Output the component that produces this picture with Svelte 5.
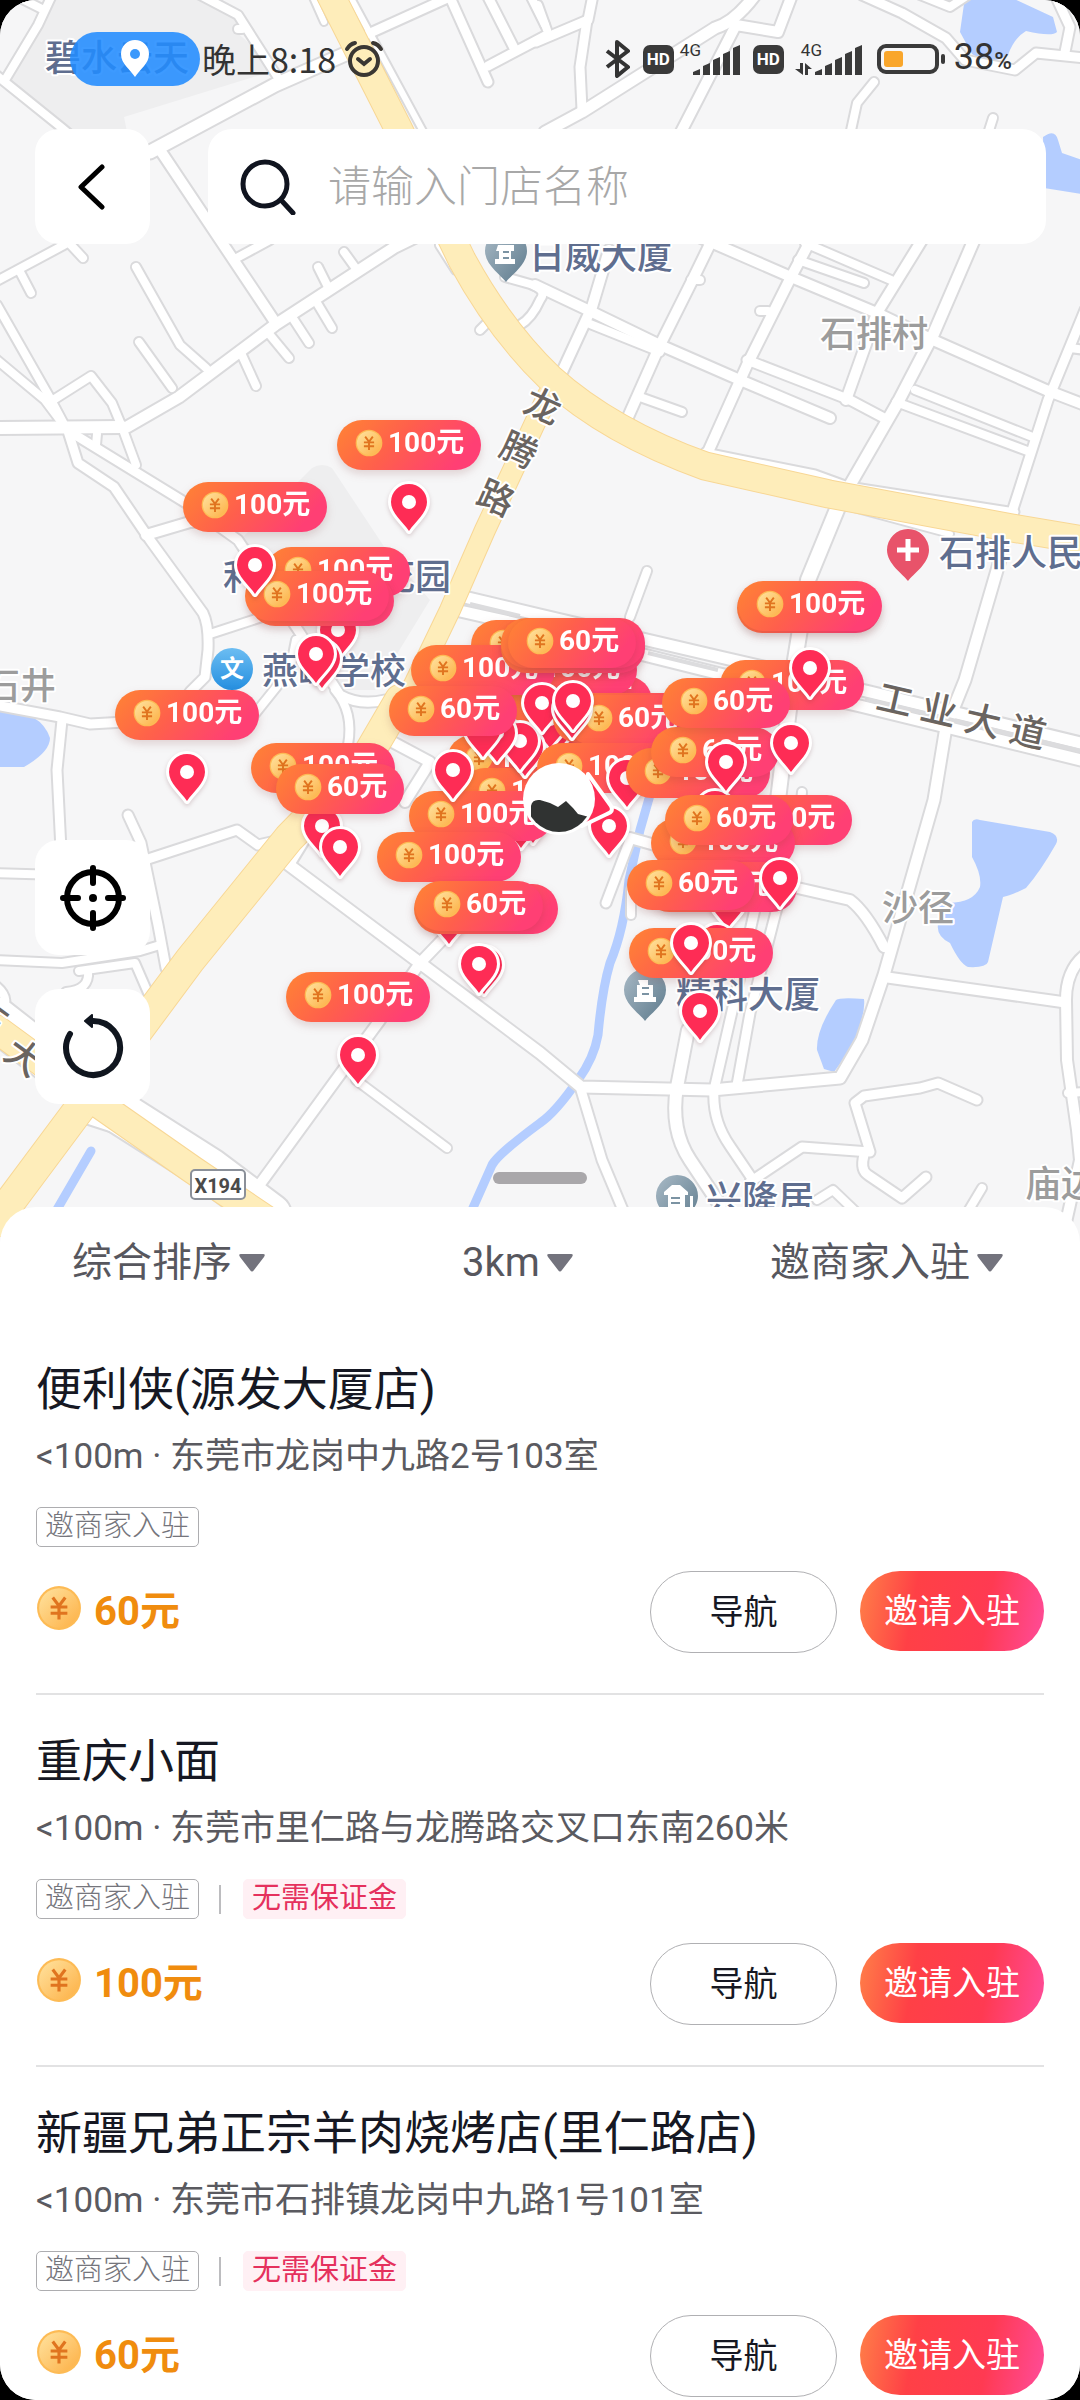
<script lang="ts">
  interface Road {
    readonly d: string;
    readonly w?: number;
  }

  interface MapLabel {
    readonly text: string;
    readonly x: number;
    readonly y: number;
    readonly tone: "poi" | "area" | "road";
    readonly rotate?: number;
  }

  // A pill is placed by its centre and top edge, a pin by its tip.
  interface Marker {
    readonly kind: "pill" | "pin";
    readonly x: number;
    readonly y: number;
    readonly price?: number;
  }

  interface Store {
    readonly name: string;
    readonly address: string;
    readonly price: number;
    readonly noDeposit: boolean;
  }

  const roads: readonly Road[] = [
    { d: "M52 -5L38 25L5 80" },
    { d: "M20 -2L44 10" },
    { d: "M-5 74L62 128L100 160" },
    { d: "M200 -5L238 15L282 84" },
    { d: "M238 29L242 29" },
    { d: "M150 152L275 85L350 52", w: 13 },
    { d: "M368 34L452 -4", w: 9 },
    { d: "M160 150L275 322", w: 10 },
    { d: "M-5 282L62 246L110 218" },
    { d: "M19 270L31 293" },
    { d: "M70 244L83 258" },
    { d: "M127 427L179 397L275 325L395 247L440 225", w: 11 },
    { d: "M233 260L270 240" },
    { d: "M318 267L328 287" },
    { d: "M344 252L357 270" },
    { d: "M317 303L332 328" },
    { d: "M294 320L309 343" },
    { d: "M270 335L289 358" },
    { d: "M241 353L256 386" },
    { d: "M136 267L180 345L206 368" },
    { d: "M139 342L172 388" },
    { d: "M-3 305L50 398L66 428" },
    { d: "M-3 360L45 400L66 428" },
    { d: "M50 402L91 376L112 403L122 427" },
    { d: "M-5 428L122 427", w: 12 },
    { d: "M67 428L78 463L114 487L150 540L203 613Q209 625 208 650L205 677L190 692", w: 9 },
    { d: "M122 427L136 465" },
    { d: "M72 433L186 503L238 540L300 633L340 695Q360 706 385 700", w: 9 },
    { d: "M97 434L96 445" },
    { d: "M146 535L190 522L220 520", w: 10 },
    { d: "M210 634L262 617" },
    { d: "M296 640L290 670L250 720" },
    { d: "M335 690Q354 712 348 745" },
    { d: "M-5 705L60 717L90 724L125 722", w: 9 },
    { d: "M62 720L57 770L61 850", w: 9 },
    { d: "M385 738L430 762L405 802", w: 10 },
    { d: "M312 -5L324 22", w: 6 },
    { d: "M352 0L425 135L470 236", w: 6 },
    { d: "M440 245L456 270" },
    { d: "M449 -5L488 82", w: 9 },
    { d: "M487 -5L515 50", w: 9 },
    { d: "M488 66L545 36", w: 9 },
    { d: "M530 -5L545 25" },
    { d: "M480 330L492 318" },
    { d: "M520 325Q532 318 540 300Q548 290 530 284L505 277" },
    { d: "M536 42L588 20L593 -5", w: 9 },
    { d: "M538 5L547 30" },
    { d: "M587 20L580 67L582 110", w: 9 },
    { d: "M545 132L582 112L715 28Q735 22 755 -5", w: 11 },
    { d: "M681 132L736 25L778 32L792 -5", w: 10 },
    { d: "M862 -5L902 13L946 38L965 60L1015 70L1036 53L1085 58", w: 9 },
    { d: "M1065 52L1070 27L1055 -5", w: 9 },
    { d: "M920 -5L950 7L968 -5" },
    { d: "M874 82L857 103L850 135" },
    { d: "M993 118L986 140" },
    { d: "M535 285L592 312L660 345L740 380L830 418", w: 10 },
    { d: "M590 324L660 352" },
    { d: "M609 250L592 307L562 372", w: 10 },
    { d: "M712 240L691 283L660 345L628 417", w: 10 },
    { d: "M691 280L700 280" },
    { d: "M808 245L791 277L747 365L708 452", w: 10 },
    { d: "M760 311L768 311" },
    { d: "M690 233L791 277L877 313L933 340L1046 390L1085 405", w: 10 },
    { d: "M798 260L864 283" },
    { d: "M805 243L891 280" },
    { d: "M922 240L877 313L846 400", w: 10 },
    { d: "M747 360L850 400L884 418", w: 9 },
    { d: "M974 240L933 335L898 402L850 485", w: 11 },
    { d: "M896 402L1030 452" },
    { d: "M915 390L1035 438" },
    { d: "M1085 310L1048 400L1012 512", w: 9 },
    { d: "M1070 348L1085 350" },
    { d: "M640 397L682 412" },
    { d: "M705 452L815 474L848 486L1015 512", w: 7 },
    { d: "M850 507L950 534", w: 6 },
    { d: "M838 507L808 580L795 660L778 800", w: 14 },
    { d: "M647 571L630 617" },
    { d: "M802 792L798 830" },
    { d: "M1000 560L965 680L946 727L934 800L884 975L862 1040L840 1078L712 1090L581 1087L540 1053L420 963L285 862", w: 11 },
    { d: "M128 815L141 843L158 925L166 968", w: 9 },
    { d: "M-5 873L60 875" },
    { d: "M145 860L237 830L258 845L280 840", w: 9 },
    { d: "M-5 960L62 963L140 951L160 945", w: 8 },
    { d: "M79 971L135 963L152 1002", w: 8 },
    { d: "M88 971Q90 990 66 992L60 1000" },
    { d: "M-5 985Q14 1000 -2 1015" },
    { d: "M306 838L290 864", w: 9 },
    { d: "M444 938L420 963L380 1020L341 1073L252 1195", w: 10 },
    { d: "M356 1080L447 1148", w: 8 },
    { d: "M581 1090L602 1160L625 1215", w: 9 },
    { d: "M688 1030L677 1087Q670 1130 690 1160L720 1205", w: 12 },
    { d: "M757 900L733 1007L714 1090Q712 1120 730 1146L753 1180", w: 9 },
    { d: "M779 900L750 1013L737 1085", w: 9 },
    { d: "M750 1182L802 1147L870 1152L855 1103L864 1096L920 1088L938 1083L977 1100", w: 9 },
    { d: "M864 1155Q860 1170 868 1175L902 1198L926 1177", w: 9 },
    { d: "M817 1200L833 1190L856 1212", w: 8 },
    { d: "M982 1188L964 1218", w: 8 },
    { d: "M884 977L1062 1002", w: 10 },
    { d: "M1085 955Q1066 970 1066 1000L1067 1060L1077 1130L1080 1160L1062 1240", w: 10 },
    { d: "M1068 1093L1085 1092" },
    { d: "M780 884L850 900Q866 912 884 947", w: 10 },
    { d: "M630 840L606 903", w: 9 },
    { d: "M630 838L655 845", w: 10 },
    { d: "M631 890L631 915", w: 8 },
    { d: "M460 596L540 615L720 657L870 692L1085 744", w: 11 },
    { d: "M460 611L540 629L720 674L860 706L1085 761", w: 11 },
    { d: "M55 1130L75 1115L115 1128", w: 9 },
    { d: "M-5 1018L100 1100L210 1170L270 1215", w: 42 },
  ];

  const yellowRoads: readonly Road[] = [
    { d: "M328 -10L398 128L462 260Q500 330 550 378Q610 432 705 466L829 494L1012 528L1090 541", w: 27 },
    { d: "M548 395L485 530L450 610L397 720", w: 20 },
    { d: "M400 700L365 760L289 838L190 960L80 1108L-5 1222", w: 30 },
    { d: "M-5 1028L100 1105L193 1170L270 1222", w: 27 },
  ];

  const labels: readonly MapLabel[] = [
    { text: "碧水云天", x: 45, y: 71, tone: "poi" },
    { text: "日威大厦", x: 529, y: 269, tone: "poi" },
    { text: "石排村", x: 820, y: 347, tone: "area" },
    { text: "石排人民", x: 939, y: 566, tone: "poi" },
    { text: "利", x: 223, y: 590, tone: "poi" },
    { text: "花园", x: 379, y: 590, tone: "poi" },
    { text: "燕岭学校", x: 262, y: 684, tone: "poi" },
    { text: "石井", x: -16, y: 699, tone: "area" },
    { text: "沙径", x: 882, y: 921, tone: "area" },
    { text: "精科大厦", x: 676, y: 1008, tone: "poi" },
    { text: "兴隆居", x: 706, y: 1212, tone: "poi" },
    { text: "庙边", x: 1025, y: 1197, tone: "area" },
    { text: "龙", x: 525, y: 419, tone: "road", rotate: 24 },
    { text: "腾", x: 501, y: 463, tone: "road", rotate: 24 },
    { text: "路", x: 478, y: 511, tone: "road", rotate: 24 },
    { text: "工", x: 877, y: 713, tone: "road", rotate: 13 },
    { text: "业", x: 921, y: 723, tone: "road", rotate: 13 },
    { text: "大", x: 965, y: 734, tone: "road", rotate: 13 },
    { text: "道", x: 1010, y: 745, tone: "road", rotate: 13 },
    { text: "大", x: 6, y: 1070, tone: "road", rotate: 36 },
    { text: "石", x: -30, y: 1030, tone: "road", rotate: 36 },
  ];

  const pill = (x: number, y: number, price: number): Marker => ({ kind: "pill", x, y, price });
  const pin = (x: number, y: number): Marker => ({ kind: "pin", x, y });

  const markers: readonly Marker[] = [
    pill(409, 420, 100), pin(409, 531),
    pill(338, 547, 100), pin(338, 659),
    pill(322, 576, 100), pin(322, 688),
    pill(317, 571, 100), pin(316, 683),
    pill(255, 482, 100), pin(255, 594),
    pill(187, 690, 100), pin(187, 801),
    pill(323, 743, 100), pin(322, 855),
    pill(340, 764, 60), pin(340, 876),
    pill(358, 972, 100), pin(358, 1084),

    pill(519, 735, 100), pill(532, 768, 100),
    pin(533, 843), pin(521, 848),
    pill(580, 676, 100), pill(565, 645, 100),
    pill(543, 620, 100), pill(483, 645, 100),
    pill(573, 623, 100), pill(573, 618, 100), pill(572, 618, 60),
    pin(557, 752), pin(550, 748), pin(525, 776), pin(520, 770),
    pin(497, 762), pin(483, 757), pin(542, 732),
    pill(625, 693, 100), pill(631, 695, 60),
    pin(572, 738), pin(573, 730),
    pill(453, 686, 60),
    pill(609, 743, 100), pin(627, 807),
    pin(609, 855),
    pill(481, 791, 100), pin(453, 799),
    pill(449, 832, 100), pin(449, 944),
    pill(486, 884, 100), pill(479, 881, 60),
    pin(484, 994), pin(479, 993),

    pill(792, 660, 100),
    pill(809, 583, 100), pill(810, 581, 100), pin(810, 697),
    pill(698, 748, 100), pill(715, 727, 60), pin(715, 838),
    pill(726, 678, 60), pin(791, 772), pin(726, 791),
    pill(780, 795, 100),
    pill(723, 818, 100), pill(729, 795, 60),
    pill(725, 862, 100), pin(728, 928),
    pill(716, 862, 100), pill(691, 860, 60), pin(780, 907),
    pin(717, 972), pill(701, 928, 100), pin(691, 972),
    pin(700, 1040),
  ];

  const stores: readonly Store[] = [
    { name: "便利侠(源发大厦店)", address: "<100m · 东莞市龙岗中九路2号103室", price: 60, noDeposit: false },
    { name: "重庆小面", address: "<100m · 东莞市里仁路与龙腾路交叉口东南260米", price: 100, noDeposit: true },
    { name: "新疆兄弟正宗羊肉烧烤店(里仁路店)", address: "<100m · 东莞市石排镇龙岗中九路1号101室", price: 60, noDeposit: true },
  ];

  const sortOptions = ["综合排序"];
  const rangeOptions = ["3km"];
  const taskOptions = ["邀商家入驻"];
  const signalBars = [6, 12, 18, 24, 30];

  let keyword = $state("");
  let sort = $state(sortOptions[0]);
  let range = $state(rangeOptions[0]);
  let task = $state(taskOptions[0]);

  const filters = [
    { id: "sort", label: "排序", options: sortOptions, get: () => sort, set: (v: string) => (sort = v) },
    { id: "range", label: "距离", options: rangeOptions, get: () => range, set: (v: string) => (range = v) },
    { id: "task", label: "任务", options: taskOptions, get: () => task, set: (v: string) => (task = v) },
  ];

  function pillWidth(price = 0): number {
    return price >= 100 ? 144 : 128;
  }
</script>

<div class="screen">
  <section class="map">
    <svg class="canvas" viewBox="0 0 1080 1243" aria-label="地图">
      <defs>
        <linearGradient id="pill-fill" x1="0" y1="0" x2="1" y2="0.3">
          <stop offset="0" stop-color="#ff8434" />
          <stop offset="0.5" stop-color="#ff5f4c" />
          <stop offset="1" stop-color="#ff3f74" />
        </linearGradient>
        <linearGradient id="coin-fill" x1="0" y1="0" x2="1" y2="1">
          <stop offset="0" stop-color="#ffe3a0" />
          <stop offset="1" stop-color="#fdb045" />
        </linearGradient>
        <linearGradient id="poi-grey" x1="0" y1="0" x2="1" y2="1">
          <stop offset="0" stop-color="#a9bac6" />
          <stop offset="1" stop-color="#5d7a8c" />
        </linearGradient>
        <linearGradient id="poi-blue" x1="0" y1="0" x2="0" y2="1">
          <stop offset="0" stop-color="#6cbdf2" />
          <stop offset="1" stop-color="#258fe0" />
        </linearGradient>
        <clipPath id="avatar-clip"><circle cx="559" cy="799" r="33" /></clipPath>
        <symbol id="coin" viewBox="0 0 44 44">
          <circle cx="22" cy="22" r="21" fill="#fdbb55" />
          <circle cx="22" cy="22" r="19" fill="url(#coin-fill)" />
          <path d="M16 12L22 20L28 12M14 21H30M14 27H30M22 20V33" fill="none" stroke="#e0741f" stroke-width="3" />
        </symbol>
        <symbol id="pin" viewBox="-24 -54 48 60">
          <path
            d="M0 0C-6 -9 -18 -18 -18 -29A18 18 0 0 1 18 -29C18 -18 6 -9 0 0Z"
            fill="#fe2c55"
            stroke="#fff"
            stroke-width="6"
            stroke-linejoin="round"
            paint-order="stroke"
          />
          <circle cx="0" cy="-29" r="7" fill="#fff" />
        </symbol>
        <symbol id="poi" viewBox="-22 -22 44 54">
          <path d="M0 31C-5 24 -21 14 -21 0A21 21 0 0 1 21 0C21 14 5 24 0 31Z" />
        </symbol>
      </defs>

      <rect width="1080" height="1243" fill="#f6f6f7" />
      <path class="block" d="M52 0H203L238 17L234 30L265 57L270 72L124 117L127 132H66L10 80Z" />
      <path class="block" d="M290 490L312 468Q322 462 332 468L385 548L430 600L375 690H330L240 540Z" />

      <g class="water">
        <path d="M-5 712Q40 708 50 738Q50 752 24 767H-5Z" />
        <path d="M965 -3H1010L1053 17L1057 32Q1052 37 1026 31Q1014 38 1008 55Q990 66 972 54L960 32Z" />
        <path d="M1043 137Q1055 128 1058 140L1062 153L1082 160V194L1044 188Z" />
        <path d="M972 822Q974 818 980 820L1050 832Q1060 836 1056 844Q1040 872 1026 888Q1010 896 1003 897L988 962Q986 968 968 967Q960 964 950 943Q936 936 938 924V902Q972 906 980 887Q982 875 972 857Z" />
        <path d="M836 1000Q840 997 864 999Q866 1016 850 1050L834 1072L824 1069L817 1050Q816 1030 836 1000Z" />
      </g>
      <g class="river">
        <path d="M91 1151L52 1218" />
        <path d="M472 1210L492 1165Q498 1154 540 1123Q556 1112 578 1080Q594 1058 598 1035Q602 990 610 963Q624 930 629 880L640 830L660 760" />
      </g>

      <g class="casing">
        {#each roads as road}
          <path d={road.d} stroke-width={(road.w ?? 8) + 4} />
        {/each}
      </g>
      <g class="surface">
        {#each roads as road}
          <path d={road.d} stroke-width={road.w ?? 8} />
        {/each}
      </g>
      <path class="median" d="M470 604L520 616M648 653L718 670M865 699L1085 752" />
      <g class="yellow-casing">
        {#each yellowRoads as road}
          <path d={road.d} stroke-width={(road.w ?? 8) + 2} />
        {/each}
      </g>
      <g class="yellow-surface">
        {#each yellowRoads as road}
          <path d={road.d} stroke-width={road.w ?? 8} />
        {/each}
      </g>

      <g class="road-sign">
        <rect x="191" y="1170" width="54" height="29" rx="4" />
        <text x="218" y="1193" text-anchor="middle">X194</text>
      </g>

      {#each labels as label}
        <text class="label {label.tone}" transform="translate({label.x} {label.y}) rotate({label.rotate ?? 0} 18 -13)">{label.text}</text>
      {/each}

      <g fill="url(#poi-grey)">
        <use href="#poi" x="484" y="229" width="44" height="54" />
        <use href="#poi" x="623" y="968" width="44" height="54" />
        <use href="#poi" x="655" y="1174" width="44" height="54" />
      </g>
      <g class="building">
        <path d="M498 245h16v6h-3v8h4v5h-20v-5h4v-8h-3z" />
        <path d="M638 980h10v5h5v12h3v5h-22v-5h3v-12h3z" />
        <path d="M664 1192l8-7h8l8 7v3h-3v12h-17v-12h-4zM690 1196h3v11h-3z" />
      </g>
      <path class="windows" d="M503 252h6M503 258h6M642 988h7M642 994h7M671 1198h9M671 1203h9" />
      <use href="#poi" x="886" y="528" width="44" height="54" fill="#e8536a" />
      <path d="M908 539v22M897 550h22" stroke="#fff" stroke-width="5" />
      <circle cx="232" cy="669" r="21" fill="url(#poi-blue)" />
      <text class="school" x="232" y="677" text-anchor="middle">文</text>

      {#each markers as marker}
        {#if marker.kind === "pill"}
          <g class="pill" transform="translate({marker.x - pillWidth(marker.price) / 2} {marker.y})">
            <rect width={pillWidth(marker.price)} height="50" rx="25" fill="url(#pill-fill)" />
            <use href="#coin" x="18" y="9" width="28" height="28" />
            <text x="51" y="32">{marker.price}元</text>
          </g>
        {:else}
          <use class="pin" href="#pin" x={marker.x - 24} y={marker.y - 54} width="48" height="60" />
        {/if}
      {/each}

      <path d="M588 774L611 806Q614 812 607 814L582 826Z" fill="#fe2c55" stroke="#fff" stroke-width="4" stroke-linejoin="round" />
      <circle class="avatar" cx="559" cy="799" r="36" />
      <path
        d="M531 806Q532 799 540 800L550 803L558 807L566 801L573 808L578 814L589 817L594 822L586 845H531Z"
        fill="#303332"
        clip-path="url(#avatar-clip)"
      />
    </svg>

    <header class="status">
      <div class="status-left">
        <span class="location" aria-label="定位中">
          <svg viewBox="0 0 28 38" width="28" height="38">
            <path d="M14 37C9 29 0 24 0 14A14 14 0 0 1 28 14C28 24 19 29 14 37Z" fill="#fff" />
            <circle cx="14" cy="14" r="5" fill="#3b99fc" />
          </svg>
        </span>
        <time class="clock">晚上8:18</time>
        <svg viewBox="0 0 40 38" width="40" height="38" fill="none" stroke="#3a3733" stroke-width="4" stroke-linecap="round">
          <circle cx="20" cy="21" r="14" />
          <path d="M14 19L20 24L26 19M3 9Q6 4 11 3M37 9Q34 4 29 3" />
        </svg>
      </div>
      <div class="status-right">
        <svg viewBox="0 0 26 38" width="26" height="38" fill="none" stroke="#333" stroke-width="4" stroke-linejoin="round">
          <path d="M2 11L23 27L12 36V2L23 11L2 27" />
        </svg>
        <span class="hd">HD</span>
        <span class="signal">
          <small>4G</small>
          <svg viewBox="0 0 48 31" width="48" height="31" fill="#3a3a3a">
            {#each signalBars as bar, i}
              <path d="M{i * 10} {31 - bar + 3}l7 -3v{bar}h-7z" />
            {/each}
          </svg>
        </span>
        <span class="hd">HD</span>
        <span class="signal data">
          <small>4G</small>
          <svg viewBox="0 0 68 31" width="68" height="31" fill="#3a3a3a">
            <path d="M5 19h3v12L0 25h5zM10 31V19l7 6h-4v6z" />
            {#each signalBars as bar, i}
              <path d="M{20 + i * 10} {31 - bar + 3}l7 -3v{bar}h-7z" />
            {/each}
          </svg>
        </span>
        <svg class="battery" viewBox="0 0 68 30" width="68" height="30">
          <rect x="2" y="2" width="58" height="26" rx="7" fill="#f6f6f7" stroke="#3a3a3a" stroke-width="4" />
          <rect x="7" y="7" width="19" height="16" rx="3" fill="#f9a62b" />
          <rect x="64" y="10" width="4" height="10" rx="2" fill="#3a3a3a" />
        </svg>
        <span class="percent">38<small>%</small></span>
      </div>
    </header>

    <div class="search-row">
      <button type="button" class="tile" aria-label="返回">
        <svg viewBox="0 0 30 46" width="30" height="46" fill="none" stroke="#000" stroke-width="5" stroke-linecap="round" stroke-linejoin="round">
          <path d="M24 3L3 23L24 43" />
        </svg>
      </button>
      <label class="search">
        <svg viewBox="0 0 56 56" width="56" height="56" fill="none" stroke="#10141f" stroke-width="5" stroke-linecap="round">
          <circle cx="25" cy="25" r="22" />
          <path d="M41 41L53 54" />
        </svg>
        <input type="text" aria-label="门店名称" placeholder="请输入门店名称" bind:value={keyword} />
      </label>
    </div>

    <div class="tools">
      <button type="button" class="tile" aria-label="定位">
        <svg viewBox="0 0 66 66" width="66" height="66" fill="none" stroke="#000" stroke-width="6" stroke-linecap="round">
          <circle cx="33" cy="33" r="26" />
          <path d="M33 3V18M33 48V63M3 33H18M48 33H63" />
          <circle cx="33" cy="33" r="4" fill="#000" stroke="none" />
        </svg>
      </button>
      <button type="button" class="tile" aria-label="刷新">
        <svg viewBox="0 0 66 66" width="66" height="66" fill="none" stroke="#10161f" stroke-width="6" stroke-linecap="round">
          <path d="M10 20A27 27 0 1 0 33 7" />
          <path d="M32 1V13L25 7Z" fill="#10161f" stroke-width="2" stroke-linejoin="round" />
        </svg>
      </button>
    </div>

    <div class="handle"></div>
  </section>

  <main class="sheet">
    <div class="filters">
      {#each filters as filter (filter.id)}
        <label class="filter">
          <select aria-label={filter.label} value={filter.get()} onchange={(e) => filter.set(e.currentTarget.value)}>
            {#each filter.options as option}
              <option>{option}</option>
            {/each}
          </select>
          <svg viewBox="0 0 26 18" width="26" height="18">
            <path d="M2 0H24Q27 0 25 3L15 16Q13 19 11 16L1 3Q-1 0 2 0Z" fill="#73737d" />
          </svg>
        </label>
      {/each}
    </div>

    <ul class="stores">
      {#each stores as store (store.name)}
        <li class="store">
          <h2>{store.name}</h2>
          <p class="address">{store.address}</p>
          <div class="tags">
            <span class="tag">邀商家入驻</span>
            {#if store.noDeposit}
              <i class="bar"></i>
              <span class="tag hot">无需保证金</span>
            {/if}
          </div>
          <div class="foot">
            <div class="price">
              <svg width="46" height="46" aria-hidden="true"><use href="#coin" width="46" height="46" /></svg>
              <strong>{store.price}元</strong>
            </div>
            <button type="button" class="action">导航</button>
            <button type="button" class="action invite">邀请入驻</button>
          </div>
        </li>
      {/each}
    </ul>
  </main>
</div>

<style>
  :global(body) {
    background: #000;
  }

  .screen {
    display: flex;
    flex-direction: column;
    height: 100vh;
    overflow: hidden;
    border-radius: 36px;
    background: #fff;
    color: #161823;
    font-family: Roboto, "Noto Sans CJK SC", sans-serif;
  }

  button,
  input,
  select {
    border: 0;
    padding: 0;
    background: none;
    color: inherit;
    font: inherit;
  }

  .map {
    position: relative;
    flex-shrink: 0;
    margin-bottom: -36px;
  }

  .canvas {
    display: block;
    width: 100%;
    height: auto;
  }

  .block {
    fill: #eeeeef;
  }

  .water {
    fill: #b4cdff;
  }

  .river {
    fill: none;
    stroke: #b4cdff;
    stroke-width: 9;
    stroke-linecap: round;
    stroke-linejoin: round;
  }

  .casing,
  .surface,
  .yellow-casing,
  .yellow-surface {
    fill: none;
    stroke-linecap: round;
    stroke-linejoin: round;
  }

  .casing {
    stroke: #dadadc;
  }

  .surface {
    stroke: #fff;
  }

  .yellow-casing {
    stroke: #f8d795;
  }

  .yellow-surface {
    stroke: #feedba;
  }

  .median {
    fill: none;
    stroke: #dcdcde;
    stroke-width: 4;
  }

  .road-sign rect {
    fill: #fff;
    stroke: #8b9099;
    stroke-width: 2;
  }

  .road-sign text {
    fill: #4a4a4a;
    font-size: 20px;
    font-weight: 700;
  }

  .label {
    font-family: "Noto Sans CJK SC", sans-serif;
    font-size: 36px;
    font-weight: 500;
    paint-order: stroke;
    stroke: #fff;
    stroke-width: 4;
    stroke-linejoin: round;
  }

  .poi {
    fill: #5f6e8f;
  }

  .area {
    fill: #9c9c9c;
  }

  .road {
    fill: #6a6460;
  }

  .building {
    fill: #fff;
  }

  .windows {
    stroke: #7b93a3;
    stroke-width: 2;
  }

  .school {
    fill: #fff;
    font-size: 24px;
    font-weight: 700;
  }

  .pill {
    filter: drop-shadow(0 4px 4px rgb(120 50 50 / 18%));
  }

  .pill text {
    fill: #fff;
    font-size: 28px;
    font-weight: 700;
  }

  .pin {
    filter: drop-shadow(0 2px 2px rgb(100 40 50 / 20%));
  }

  .avatar {
    fill: #fff;
  }

  .status {
    position: absolute;
    top: 32px;
    left: 0;
    right: 0;
    display: flex;
    justify-content: space-between;
    align-items: center;
    height: 54px;
    padding: 0 68px 0 70px;
    color: #333;
  }

  .status-left,
  .status-right {
    display: flex;
    align-items: center;
  }

  .location {
    display: grid;
    place-items: center;
    width: 130px;
    height: 54px;
    margin-right: 2px;
    border-radius: 27px;
    background: rgb(34 140 255 / 88%);
  }

  .clock {
    margin-right: 8px;
    font-family: "Noto Sans CJK SC", sans-serif;
    font-size: 34px;
    line-height: 54px;
  }

  .hd {
    margin-left: 12px;
    width: 31px;
    border-radius: 7px;
    background: #3a3a3a;
    color: #fff;
    font-size: 17px;
    font-weight: 700;
    line-height: 29px;
    text-align: center;
  }

  .signal {
    position: relative;
    display: flex;
    margin-left: 19px;
  }

  .signal small {
    position: absolute;
    top: -4px;
    left: -13px;
    font-size: 17px;
    line-height: 20px;
  }

  .signal.data {
    margin-left: 11px;
  }

  .signal.data small {
    left: 6px;
  }

  .battery {
    margin: 0 9px 0 14px;
  }

  .percent {
    font-size: 36px;
    line-height: 54px;
  }

  .percent small {
    font-size: 24px;
    font-weight: 500;
  }

  .search-row {
    position: absolute;
    top: 129px;
    left: 35px;
    right: 34px;
    display: flex;
    gap: 58px;
  }

  .tile {
    display: grid;
    place-items: center;
    flex-shrink: 0;
    width: 115px;
    height: 115px;
    border-radius: 24px;
    background: #fff;
    cursor: pointer;
  }

  .search {
    flex: 1;
    display: flex;
    align-items: center;
    gap: 32px;
    min-width: 0;
    padding: 0 32px;
    border-radius: 24px;
    background: #fff;
  }

  .search input {
    flex: 1;
    min-width: 0;
    outline: 0;
    font-size: 43px;
    line-height: 60px;
  }

  .search input::placeholder {
    color: #a8a8a8;
    font-weight: 300;
  }

  .tools {
    position: absolute;
    left: 35px;
    bottom: 139px;
    display: flex;
    flex-direction: column;
    gap: 34px;
  }

  .handle {
    position: absolute;
    left: 50%;
    bottom: 59px;
    width: 94px;
    height: 12px;
    margin-left: -47px;
    border-radius: 6px;
    background: #a9a7aa;
  }

  .sheet {
    position: relative;
    flex: 1;
    display: flex;
    flex-direction: column;
    min-height: 0;
    border-radius: 36px 36px 0 0;
    background: #fff;
  }

  .filters {
    display: flex;
    justify-content: space-between;
    padding: 28px 77px 32px 72px;
    color: #57575e;
  }

  .filter {
    display: flex;
    align-items: center;
    gap: 7px;
  }

  .filter select {
    appearance: none;
    font-size: 40px;
    line-height: 56px;
  }

  .stores {
    flex: 1;
    min-height: 0;
    margin: 0;
    padding: 0 36px;
    overflow-y: auto;
    scrollbar-width: none;
    list-style: none;
  }

  .store {
    padding: 34px 0 40px;
    border-bottom: 2px solid #e2e2e3;
  }

  h2 {
    margin: 0 0 12px;
    font-size: 46px;
    font-weight: 400;
    line-height: 64px;
  }

  .address {
    margin: 0 0 26px;
    color: #5a5a60;
    font-size: 35px;
    line-height: 48px;
  }

  .tags {
    display: flex;
    align-items: center;
    height: 40px;
    margin-bottom: 24px;
  }

  .tag {
    box-sizing: border-box;
    height: 40px;
    padding: 0 8px;
    border: 1px solid #adadb0;
    border-radius: 5px;
    color: #75757c;
    font-size: 29px;
    font-weight: 300;
    line-height: 36px;
  }

  .tag.hot {
    border-color: #fff0f4;
    background: #fff0f4;
    color: #e5315d;
    font-weight: 400;
  }

  .bar {
    width: 2px;
    height: 29px;
    margin: 0 22px 0 20px;
    background: #bcbcbf;
  }

  .foot {
    display: flex;
    height: 82px;
  }

  .price {
    flex: 1;
    display: flex;
    align-items: center;
    gap: 12px;
    padding-bottom: 8px;
    color: #f08c0e;
    font-size: 40px;
  }

  .action {
    box-sizing: border-box;
    width: 187px;
    height: 82px;
    padding-bottom: 6px;
    border: 1px solid #b0b0b3;
    border-radius: 41px;
    font-size: 34px;
    cursor: pointer;
  }

  .action.invite {
    width: 184px;
    height: 80px;
    margin-left: 23px;
    border: 0;
    background: linear-gradient(100deg, #ff8048 0%, #ff4046 30%, #ff3a52 68%, #ff4c9a 100%);
    color: #fff;
  }
</style>
